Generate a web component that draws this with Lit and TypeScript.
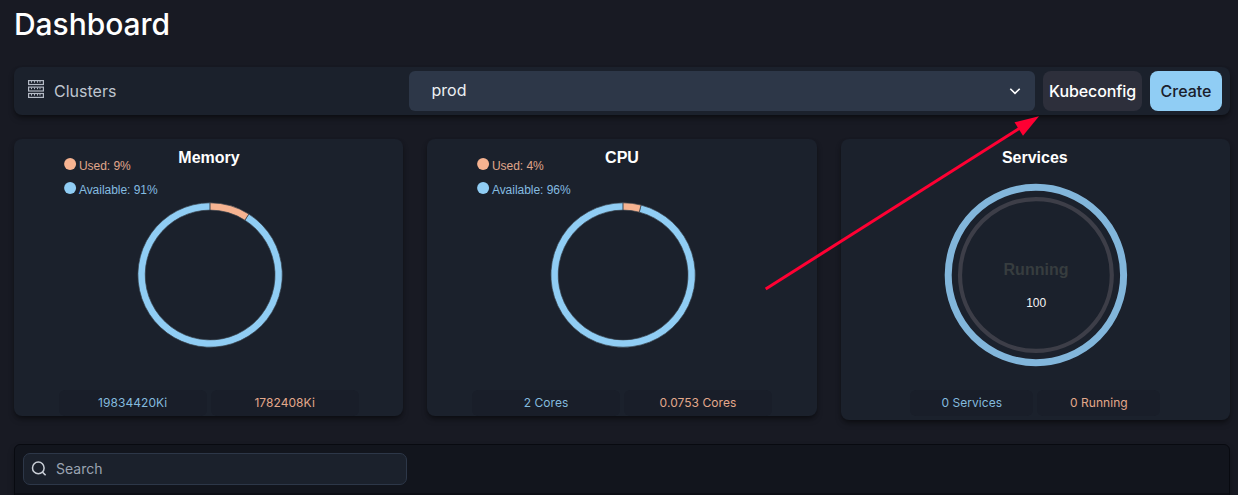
import { LitElement, html, css, svg } from "lit";
import { customElement, property } from "lit/decorators.js";

const cardStyles = css`
  :host { display: flex; flex-direction: column; align-items: center; border-radius: 8px; background: #1b212c;
    box-shadow: 0 4px 6px -1px rgba(0,0,0,.35), 0 2px 4px -1px rgba(0,0,0,.3); }
  .chart { display: block; width: 300px; height: 251px; flex: none; }
  .title { font: bold 16px "Liberation Sans", Arial, sans-serif; fill: #fff; text-anchor: middle; }
  .stats { display: flex; gap: 4px; }
  .stat { height: 26px; border-radius: 6px; background: #191e29; display: flex; align-items: center; justify-content: center;
    font: 12px/18px Inter, sans-serif; letter-spacing: .05px; }
  .a { color: #83bade; }
  .b { color: #e3a88b; }
`;

@customElement("usage-card")
class UsageCard extends LitElement {
  @property() heading = "";
  @property({ type: Number }) used = 0;
  @property() total = "";
  @property() consumed = "";

  static styles = [cardStyles, css`
    :host { height: 277px; }
    .legend { font: 12px "Liberation Sans", Arial, sans-serif; letter-spacing: -.03px; }
    .orange { fill: #f6b391; }
    .blue { fill: #90cdf4; }
    .dim-orange { fill: #e0a68a; }
    .dim-blue { fill: #85bce0; }
    .seg { stroke: #36404b; stroke-width: .7; }
    .stat { width: 148px; }
  `];

  arc(from: number, to: number) {
    const R = 72.2, r = 64.9, cx = 151.1, cy = 136;
    const p = (f: number, rad: number) => {
      const t = f * 2 * Math.PI;
      return `${(cx + rad * Math.sin(t)).toFixed(2)} ${(cy - rad * Math.cos(t)).toFixed(2)}`;
    };
    const big = to - from > 0.5 ? 1 : 0;
    return `M${p(from, R)}A${R} ${R} 0 ${big} 1 ${p(to, R)}L${p(to, r)}A${r} ${r} 0 ${big} 0 ${p(from, r)}Z`;
  }

  render() {
    const f = this.used / 100;
    return html`
      <svg class="chart" viewBox="0 0 300 251">
        ${svg`
          <text class="title" x="150" y="24">${this.heading}</text>
          <circle class="orange" cx="11.1" cy="25" r="6"></circle>
          <text class="legend dim-orange" x="19.9" y="31">Used: ${this.used}%</text>
          <circle class="blue" cx="11.1" cy="49" r="6"></circle>
          <text class="legend dim-blue" x="19.9" y="55">Available: ${100 - this.used}%</text>
          <path class="seg blue" d=${this.arc(f, 1)}></path>
          <path class="seg orange" d=${this.arc(0, f)}></path>
        `}
      </svg>
      <div class="stats"><div class="stat a">${this.total}</div><div class="stat b">${this.consumed}</div></div>
    `;
  }
}

@customElement("services-card")
class ServicesCard extends LitElement {
  static styles = [cardStyles, css`
    :host { height: 281px; }
    .state { fill: #373d3f; }
    .value { font: 12px "Liberation Sans", Arial, sans-serif; fill: #f4f4f4; text-anchor: middle; }
    .outer { fill: none; stroke: #82b6db; stroke-width: 7; }
    .inner { fill: none; stroke: #3d3e48; stroke-width: 4.2; }
    .stat { width: 123px; }
  `];
  render() {
    return html`
      <svg class="chart" viewBox="0 0 300 251">
        <text class="title" x="149.8" y="24">Services</text>
        <circle class="outer" cx="150.9" cy="136" r="87.7"></circle>
        <circle class="inner" cx="150.9" cy="136" r="75.9"></circle>
        <text class="title state" x="151" y="136">Running</text>
        <text class="value" x="151.2" y="168">100</text>
      </svg>
      <div class="stats"><div class="stat a">0 Services</div><div class="stat b">0 Running</div></div>
    `;
  }
}

@customElement("app-root")
class AppRoot extends LitElement {
  static styles = css`
    :host { display: block; position: relative; box-sizing: border-box; height: 495px; overflow: hidden; padding: 0 8px 0 14px;
      background: #181a23; font-family: Inter, sans-serif; color: #fff; }
    h1 { margin: 0; height: 67px; font-size: 30px; line-height: 48px; font-weight: 500; letter-spacing: -.05px; }
    .bar { display: flex; align-items: center; box-sizing: border-box; height: 48px; padding: 0 8px 0 14px; border-radius: 8px; background: #1b212c;
      box-shadow: 0 4px 6px -1px rgba(0,0,0,.35), 0 2px 4px -1px rgba(0,0,0,.3); }
    .label { display: flex; align-items: center; width: 381px; font-size: 16px; color: #bfc5cf; }
    .label svg { margin: 0 10px 4px 0; }
    .select { flex: 1; box-sizing: border-box; height: 40px; padding: 0 12px 2px 22.5px; display: flex; align-items: center; justify-content: space-between;
      border-radius: 6px; background: #2d3748; color: #eceff3; font-size: 16px; }
    .select svg { margin-top: 2px; }
    .btn { height: 40px; padding: 0; margin: 0 0 0 8px; border: 0; border-radius: 8px; font: 500 16px Inter, sans-serif; white-space: nowrap; }
    .kube { width: 99px; background: #2d2f3b; color: #fff; letter-spacing: -.1px; }
    .create { width: 72px; background: #90cdf4; color: #1a202c; }
    .cards { display: grid; grid-template-columns: repeat(3, 1fr); gap: 24px; align-items: start; margin-top: 24px; height: 305px; }
    .table { box-sizing: border-box; height: 80px; padding: 8px; border: 1px solid #080a10; border-radius: 6px; background: #12151d;
      box-shadow: 0 4px 6px rgba(0,0,0,.3); }
    .tools { height: 40px; border-bottom: 2px solid #0c0e15; margin: 0 -8px; padding: 0 8px; }
    .search { box-sizing: border-box; width: 384px; height: 32px; border: 1px solid #2d3748; border-radius: 7px; background: #1b212c; color: #9aa3b1;
      font-size: 14px; line-height: 16px; display: flex; align-items: center; padding: 0 0 1px 7px; gap: 8px; }
    .arrow { position: absolute; left: 0; top: 0; pointer-events: none; }
  `;

  render() {
    const rows = [0.6, 7.1, 13.5];
    return html`
      <h1>Dashboard</h1>
      <div class="bar">
        <div class="label">
          <svg width="16" height="18" viewBox="0 0 16 18" fill="none" stroke="#b4bac5">
            ${rows.map((y) => svg`
              <rect x="0.6" y=${y} width="14.8" height="3.9" stroke-width="1.2"></rect>
              <path d=${`M3.5 ${y + 0.5}v1.6M6.5 ${y + 0.5}v1.6M9.5 ${y + 0.5}v1.6M12 ${y + 0.5}v1.6`}></path>`)}
          </svg>
          Clusters
        </div>
        <div class="select">
          <span>prod</span>
          <svg width="16" height="16" viewBox="0 0 16 16" fill="none" stroke="#fff" stroke-width="1.6"><path d="M3.3 5.8 8 10.4l4.7-4.6"></path></svg>
        </div>
        <button class="btn kube">Kubeconfig</button>
        <button class="btn create">Create</button>
      </div>
      <div class="cards">
        <usage-card heading="Memory" used="9" total="19834420Ki" consumed="1782408Ki"></usage-card>
        <usage-card heading="CPU" used="4" total="2 Cores" consumed="0.0753 Cores"></usage-card>
        <services-card></services-card>
      </div>
      <div class="table">
        <div class="tools">
          <div class="search">
            <svg width="17" height="17" viewBox="0 0 17 17" fill="none" stroke="#cbd0d8" stroke-width="1.5"><circle cx="7.3" cy="7.9" r="5.8"></circle><path d="M11.5 12.1 14.6 15.2"></path></svg>
            <span>Search</span>
          </div>
        </div>
      </div>
      <svg class="arrow" width="1238" height="495" viewBox="0 0 1238 495">
        <path d="M765.7 289 1021 127.3" stroke="#ff0033" stroke-width="3"></path>
        <path d="M1039 116.2 1014.5 122.3 1023 135.7Z" fill="#ff0033"></path>
      </svg>
    `;
  }
}
